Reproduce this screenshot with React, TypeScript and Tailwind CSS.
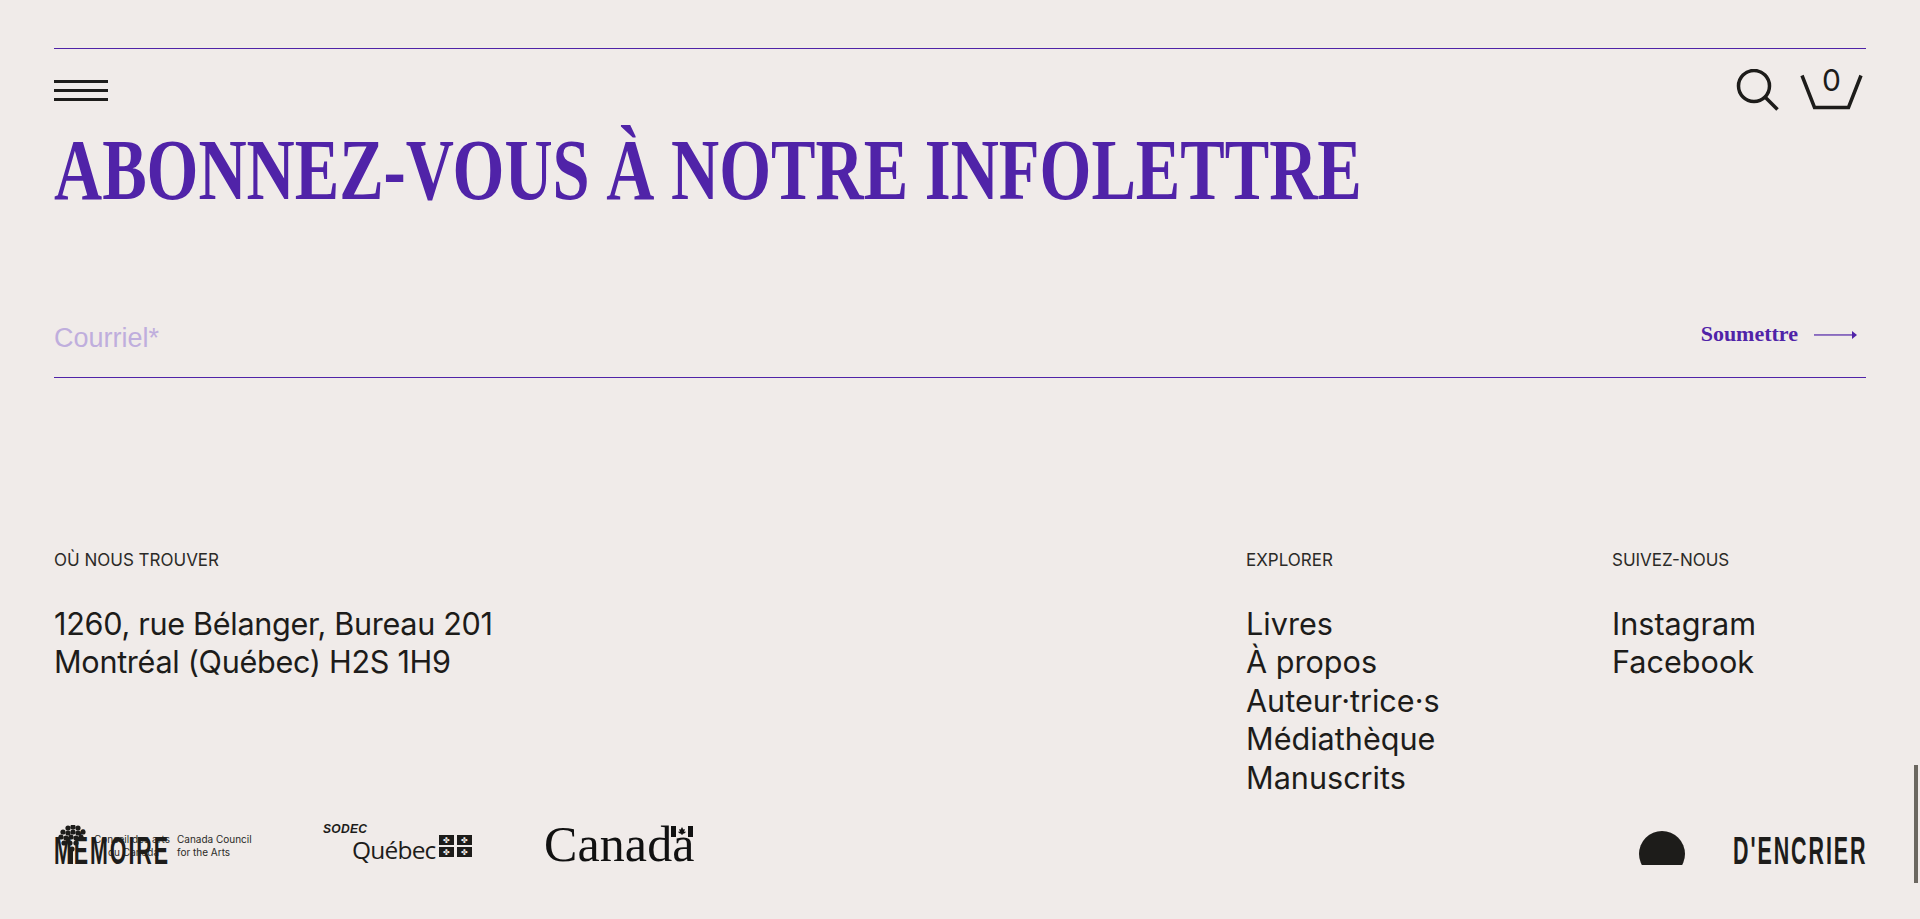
const sans = "font-['Inter','Liberation_Sans',sans-serif]";

function FooterColumn({
  title,
  items,
  className,
  listClassName,
}: {
  title: string;
  items: string[];
  className?: string;
  listClassName?: string;
}) {
  return (
    <div className={className}>
      <h3 className="text-[17px] leading-[20px] uppercase text-[#2b2a27]">{title}</h3>
      <ul className={`mt-[35px] text-[30.6px] leading-[38.4px] text-[#1d1c1a] ${listClassName ?? ""}`}>
        {items.map((item) => (
          <li key={item}>{item}</li>
        ))}
      </ul>
    </div>
  );
}

function CouncilLogo() {
  const dots = [
    [14, 3], [19, 2], [24, 3], [9, 7], [14, 8], [19, 7], [24, 8], [29, 7],
    [7, 12], [12, 13], [17, 12], [22, 13], [27, 12], [10, 18], [16, 18], [22, 18], [18, 24],
  ];
  return (
    <div className="relative h-[40px] w-[197px] shrink-0">
      <svg className="absolute left-0 top-0" width="32" height="40" viewBox="0 0 32 40" fill="#1d1c1a">
        {dots.map(([x, y]) => (
          <circle key={`${x}-${y}`} cx={x} cy={y} r="2.6" />
        ))}
        <rect x="15" y="24" width="4" height="15" />
      </svg>
      <div className="absolute left-[40px] top-[8px] whitespace-nowrap text-[10px] leading-[12.5px] text-[#2b2a27]">
        Conseil des arts
        <br />
        <span className="pl-[14px]">du Canada</span>
      </div>
      <div className="absolute left-[123px] top-[8px] whitespace-nowrap text-[10px] leading-[12.5px] text-[#2b2a27]">
        Canada Council
        <br />
        for the Arts
      </div>
      <div className="absolute left-0 top-[12px] h-[28px] w-[114px]">
        <span className="block w-max origin-top-left scale-x-[0.55] whitespace-nowrap font-['Liberation_Sans',sans-serif] text-[39px] font-bold leading-[28px] tracking-[3.5px] text-[#1d1c1a]">
          MÉMOIRE
        </span>
      </div>
    </div>
  );
}

function QuebecLogo() {
  return (
    <div className="relative ml-[72px] h-[40px] w-[150px] shrink-0">
      <div className="absolute left-0 top-[-2px] font-['Liberation_Sans',sans-serif] text-[12px] font-bold italic leading-[12px] tracking-[0.3px] text-[#1d1c1a]">
        SODEC
      </div>
      <div className="absolute left-[29px] top-[9px] font-['Open_Sans',sans-serif] text-[24.5px] leading-[32px] tracking-[-0.8px] text-[#1d1c1a]">
        Québec
      </div>
      <div className="absolute left-[116px] top-[10px] grid w-[33px] grid-cols-2 gap-x-[3px] gap-y-[2px]">
        {[0, 1, 2, 3].map((i) => (
          <div key={i} className="flex h-[10px] items-center justify-center bg-[#1d1c1a] text-[8px] leading-none text-[#f0ebe9]">
            ✤
          </div>
        ))}
      </div>
    </div>
  );
}

function CanadaLogo() {
  return (
    <div className="relative ml-[71px] h-[40px] w-[152px] shrink-0">
      <div className="absolute left-0 top-[-7px] font-['Liberation_Serif',serif] text-[50px] leading-[52px] tracking-[0.1px] text-[#111]">
        Canada
      </div>
      <svg className="absolute left-[127px] top-[1px]" width="22" height="11" viewBox="0 0 22 11" fill="#111">
        <rect x="0" y="0" width="5" height="11" />
        <rect x="17" y="0" width="5" height="11" />
        <path d="M11 1l1.3 2.4 1.5-.5-.6 3 1.6-.4-.6 1.6-2.7.8V9h-1V7.9l-2.7-.8-.6-1.6 1.6.4-.6-3 1.5.5z" />
      </svg>
    </div>
  );
}

export default function App() {
  return (
    <div className={`relative h-[919px] overflow-hidden bg-[#f0ebe9] px-[54px] pt-[48px] ${sans}`}>
      <div className="h-px bg-[#5023a8]" />

      <header className="flex items-start justify-between pt-[20px]">
        <div className="mt-[11px] flex w-[54px] flex-col gap-[6px]">
          <span className="h-[3px] bg-[#1d1c1a]" />
          <span className="h-[3px] bg-[#1d1c1a]" />
          <span className="h-[3px] bg-[#1d1c1a]" />
        </div>
        <div className="flex items-start">
          <svg width="44" height="46" viewBox="0 0 44 46" fill="none" stroke="#1d1c1a" strokeWidth="3.5">
            <circle cx="18" cy="17" r="15.5" />
            <path d="M29 28l12.5 12.5" />
          </svg>
          <div className="relative ml-[20px] mr-[3px] h-[46px] w-[63px]">
            <svg className="absolute left-0 top-0" width="63" height="46" viewBox="0 0 63 46" fill="none" stroke="#1d1c1a" strokeWidth="3.5">
              <path d="M2 6.500l12.500 32h34l12.500-32" />
            </svg>
            <span className="absolute inset-x-0 top-[-4px] text-center text-[30px] leading-[30px] text-[#1d1c1a]">0</span>
          </div>
        </div>
      </header>

      <h1 className="mt-[11px] w-max origin-left scale-x-[0.775] whitespace-nowrap font-['Liberation_Serif',serif] text-[86px] font-bold leading-[88px] text-[#5023a8]">
        ABONNEZ-VOUS À NOTRE INFOLETTRE
      </h1>

      <form className="mt-[88px] flex h-[76px] items-center justify-between border-b border-[#5023a8]">
        <span className="mb-[2px] font-['Liberation_Sans',sans-serif] text-[27px] text-[#bfaedd]">Courriel*</span>
        <button type="button" className="mb-[12px] mr-[9px] flex items-center gap-[16px] text-[#5023a8]">
          <span className="font-['Liberation_Serif',serif] text-[22px] font-bold">Soumettre</span>
          <svg className="mt-[3px]" width="43" height="10" viewBox="0 0 43 10" fill="#5023a8">
            <rect x="0" y="4.200" width="39" height="1.500" opacity="0.8" />
            <path d="M38 1l5 4-5 4z" />
          </svg>
        </button>
      </form>

      <div className="mt-[172px] flex">
        <FooterColumn
          className="w-[1192px]"
          listClassName="tracking-[-0.3px]"
          title="Où nous trouver"
          items={["1260, rue Bélanger, Bureau 201", "Montréal (Québec) H2S 1H9"]}
        />
        <FooterColumn
          className="w-[366px]"
          title="Explorer"
          items={["Livres", "À propos", "Auteur·trice·s", "Médiathèque", "Manuscrits"]}
        />
        <FooterColumn title="Suivez-nous" items={["Instagram", "Facebook"]} />
      </div>

      <div className="mt-[28px] flex h-[40px] items-start">
        <CouncilLogo />
        <QuebecLogo />
        <CanadaLogo />
        <div className="ml-auto flex h-[40px] items-end">
          <div className="h-[34px] w-[46px] overflow-hidden">
            <div className="h-[46px] w-[46px] rounded-full bg-[#1d1c1a]" />
          </div>
          <div className="ml-[48px] h-[28px] w-[133px]">
            <span className="block w-max origin-top-left scale-x-[0.55] whitespace-nowrap font-['Liberation_Sans',sans-serif] text-[39px] font-bold leading-[28px] tracking-[3.5px] text-[#1d1c1a]">
              D'ENCRIER
            </span>
          </div>
        </div>
      </div>

      {/* scroll indicator */}
      <div className="absolute right-[2px] top-[765px] h-[118px] w-[4px] bg-[#6b6760]" />
    </div>
  );
}
